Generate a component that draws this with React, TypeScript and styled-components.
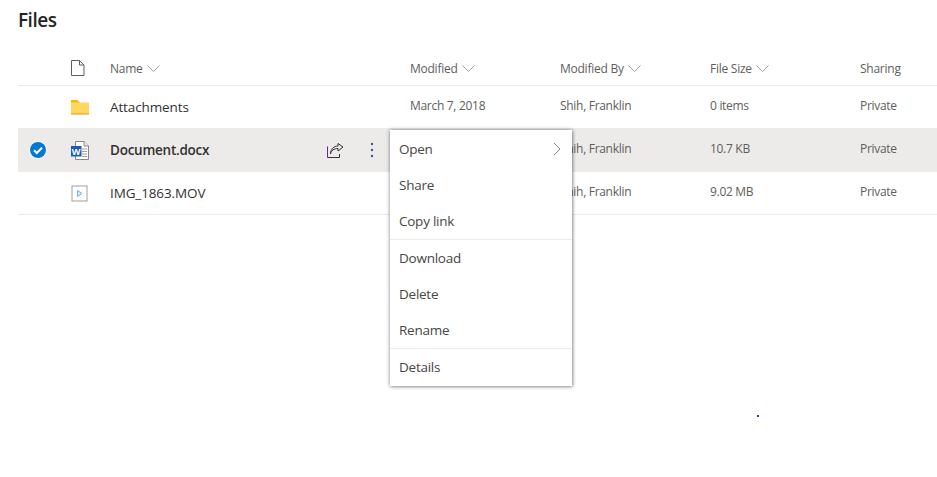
import styled, { createGlobalStyle } from 'styled-components'

const GlobalStyle = createGlobalStyle`
  body {
    margin: 0;
    background: #fff;
    font-family: "Open Sans", "Liberation Sans", sans-serif;
  }
`

const Page = styled.div`
  position: relative;
  width: 937px;
  height: 477px;
  overflow: hidden;
  padding-left: 18px;
  box-sizing: border-box;
`

const Title = styled.h1`
  margin: 0;
  height: 50px;
  padding-top: 7px;
  box-sizing: border-box;
  font-size: 19px;
  line-height: 26px;
  font-weight: 600;
  letter-spacing: -0.5px;
  color: #252423;
`

const Row = styled.div<{ $selected?: boolean; $header?: boolean }>`
  display: grid;
  grid-template-columns: 40px 52px 300px 150px 150px 150px 1fr;
  align-items: center;
  height: ${(p) => (p.$header ? '35px' : '42px')};
  border-bottom: 1px solid #edebe9;
  background: ${(p) => (p.$selected ? '#edebe9' : 'transparent')};
`

const CheckCell = styled.div`
  display: flex;
  justify-content: center;
`

const IconCell = styled.div`
  display: flex;
  align-items: center;
  padding-left: 13px;
`

const HeaderIconCell = styled(IconCell)`
  padding-left: 13px;
  padding-top: 1px;
`

const HeaderLabel = styled.div`
  display: flex;
  align-items: center;
  gap: 4px;
  padding-top: 2px;
  font-size: 12px;
  letter-spacing: -0.25px;
  color: #605e5c;
`

const NameCell = styled.div<{ $bold?: boolean }>`
  display: flex;
  align-items: center;
  font-size: 13.5px;
  letter-spacing: ${(p) => (p.$bold ? '-0.25px' : '-0.12px')};
  font-weight: ${(p) => (p.$bold ? 600 : 400)};
  color: #323130;
`

const RowActions = styled.div`
  display: flex;
  align-items: center;
  gap: 26px;
  margin-left: auto;
  margin-right: 36px;
`

const Cell = styled.div`
  padding-bottom: 3px;
  font-size: 12px;
  letter-spacing: -0.3px;
  color: #605e5c;
`

const Menu = styled.div`
  position: absolute;
  left: 390px;
  top: 130px;
  width: 182px;
  padding: 1px 0;
  box-sizing: border-box;
  background: #fff;
  box-shadow: 0 0 4px rgba(0, 0, 0, 0.45), 1px 1px 3px rgba(0, 0, 0, 0.2);
`

const MenuItem = styled.div`
  display: flex;
  align-items: center;
  justify-content: space-between;
  height: 36px;
  padding: 0 11px 0 9px;
  font-size: 13.5px;
  letter-spacing: -0.25px;
  color: #484644;
`

const MenuDivider = styled.div`
  height: 1px;
  background: #edebe9;
`

const Speck = styled.div`
  position: absolute;
  left: 757px;
  top: 415px;
  width: 2px;
  height: 2px;
  background: #2a2ae0;
`

const Chevron = () => (
  <svg width="13" height="7" viewBox="0 0 13 7" fill="none">
    <path d="M.5.5l6 6 6-6" stroke="#a19f9d" strokeWidth="1" />
  </svg>
)

const BlankFileIcon = () => (
  <svg width="14" height="16" viewBox="0 0 14 16" fill="none">
    <path d="M.5.5h8l4.500 4.500v10.500H.5z" fill="#fff" stroke="#605e5c" />
    <path d="M8.500.5v4.500H13" stroke="#605e5c" />
  </svg>
)

const FolderIcon = () => (
  <svg width="18" height="15" viewBox="0 0 18 15">
    <path d="M0 0h6l3 2.500h9V14H0z" fill="#ffd75e" />
    <path d="M0 0h6l3 2.500H0z" fill="#ffb900" />
    <rect y="13.500" width="18" height="1" fill="#e8950f" />
  </svg>
)

const WordIcon = () => (
  <svg width="18" height="19" viewBox="0 0 18 19">
    <path d="M4.500.5h8.500l4.500 4.500v13.500h-13z" fill="#fff" stroke="#8a8886" />
    <path d="M13 .5v4.500h4.500" fill="#edebe9" stroke="#8a8886" />
    <path d="M11 8h5M11 10.500h5M11 13h5M11 15.500h5" stroke="#a19f9d" />
    <rect y="5" width="10.500" height="10.500" fill="#185abd" />
    <text x="5.200" y="13.500" fontSize="9" fontWeight="700" textAnchor="middle" fill="#fff" fontFamily="Open Sans">
      W
    </text>
  </svg>
)

const VideoIcon = () => (
  <svg width="17" height="17" viewBox="0 0 17 17" fill="none">
    <rect x="1" y="1" width="15" height="15" fill="#fff" stroke="#a19f9d" />
    <path d="M6.500 5.500l4.500 3-4.500 3z" fill="#deecf9" stroke="#71afe5" />
  </svg>
)

const SelectedCheck = () => (
  <svg width="18" height="18" viewBox="0 0 18 18">
    <circle cx="9" cy="9" r="9" fill="#fff" />
    <circle cx="9" cy="9" r="8" fill="#0078d4" />
    <path d="M5 9.300l2.800 2.700L13 6.800" fill="none" stroke="#fff" strokeWidth="2" />
  </svg>
)

const ShareIcon = () => (
  <svg width="17" height="15" viewBox="0 0 17 15" fill="none">
    <path d="M.5 3.500v11" stroke="#5c2d91" />
    <path d="M.5 14.500h12V11" stroke="#323130" />
    <path d="M3.500 11C4 7.500 7 5.500 11 5.500V8l5-4-5-3.500V3C7 3 3.500 6 3.500 11z" stroke="#323130" />
  </svg>
)

const MoreIcon = () => (
  <svg width="4" height="16" viewBox="0 0 4 16" fill="#2b5f9e">
    <circle cx="2" cy="2" r="1.200" />
    <circle cx="2" cy="8" r="1.200" />
    <circle cx="2" cy="14" r="1.200" />
  </svg>
)

const SubmenuChevron = () => (
  <svg width="8" height="14" viewBox="0 0 8 14" fill="none">
    <path d="M1 1l6 6-6 6" stroke="#8a8886" />
  </svg>
)

const columns = ['Modified', 'Modified By', 'File Size']

const App = () => {
  return (
    <Page>
      <GlobalStyle />
      <Title>Files</Title>
      <Row $header>
        <div />
        <HeaderIconCell>
          <BlankFileIcon />
        </HeaderIconCell>
        <HeaderLabel>
          Name <Chevron />
        </HeaderLabel>
        {columns.map((c) => (
          <HeaderLabel key={c}>
            {c} <Chevron />
          </HeaderLabel>
        ))}
        <HeaderLabel>Sharing</HeaderLabel>
      </Row>
      <Row>
        <div />
        <IconCell>
          <FolderIcon />
        </IconCell>
        <NameCell>Attachments</NameCell>
        <Cell>March 7, 2018</Cell>
        <Cell>Shih, Franklin</Cell>
        <Cell>0 items</Cell>
        <Cell>Private</Cell>
      </Row>
      <Row $selected>
        <CheckCell>
          <SelectedCheck />
        </CheckCell>
        <IconCell>
          <WordIcon />
        </IconCell>
        <NameCell $bold>
          Document.docx
          <RowActions>
            <ShareIcon />
            <MoreIcon />
          </RowActions>
        </NameCell>
        <Cell />
        <Cell>Shih, Franklin</Cell>
        <Cell>10.7 KB</Cell>
        <Cell>Private</Cell>
      </Row>
      <Row>
        <div />
        <IconCell>
          <VideoIcon />
        </IconCell>
        <NameCell>IMG_1863.MOV</NameCell>
        <Cell />
        <Cell>Shih, Franklin</Cell>
        <Cell>9.02 MB</Cell>
        <Cell>Private</Cell>
      </Row>
      <Menu>
        <MenuItem>
          Open <SubmenuChevron />
        </MenuItem>
        <MenuItem>Share</MenuItem>
        <MenuItem>Copy link</MenuItem>
        <MenuDivider />
        <MenuItem>Download</MenuItem>
        <MenuItem>Delete</MenuItem>
        <MenuItem>Rename</MenuItem>
        <MenuDivider />
        <MenuItem>Details</MenuItem>
      </Menu>
      <Speck />
    </Page>
  )
}

export default App
